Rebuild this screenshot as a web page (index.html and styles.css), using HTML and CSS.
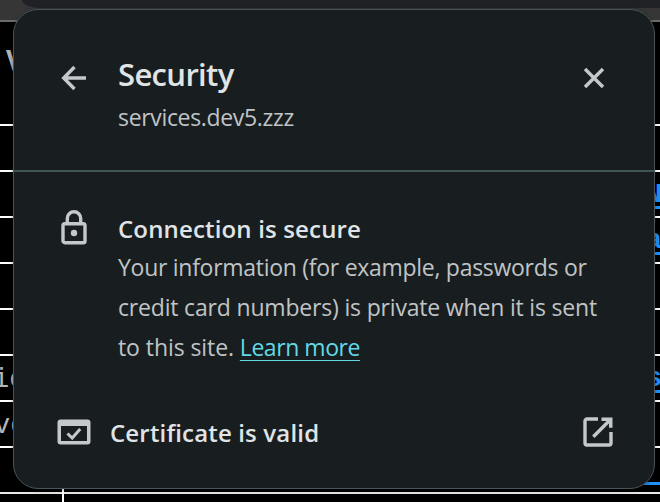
FILE: index.html
```html
<!DOCTYPE html>
<html lang="en">
<head>
<meta charset="utf-8">
<title>Security</title>
<link rel="stylesheet" href="styles.css">
</head>
<body>
<div class="toolbar"><div class="tabs"></div></div>
<div class="page">
  <div class="row head"><span class="title">V</span></div>
  <div class="row"></div>
  <div class="row"><a class="link">N</a></div>
  <div class="row"><a class="link">a</a></div>
  <div class="row"></div>
  <div class="row"></div>
  <div class="row"><span class="cell tight">ic</span><a class="link">s</a></div>
  <div class="row"><span class="cell">ve</span></div>
  <div class="row last"><a class="link wide"></a></div>
  <div class="foot"></div>
</div>
<section class="popup">
  <header class="header">
    <svg class="back" viewBox="0 0 28 28"><path d="M14.5 3 3.7 14l10.8 11M4 14h22" fill="none" stroke="currentColor" stroke-width="3.4"/></svg>
    <div class="heading"><h1>Security</h1><p>services.dev5.zzz</p></div>
    <svg class="close" viewBox="0 0 24 24"><path d="m3 3 18 18M21 3 3 21" fill="none" stroke="currentColor" stroke-width="3.4"/></svg>
  </header>
  <div class="connection">
    <svg class="lock" viewBox="0 0 26 36"><path d="M6.3 14V8.5a6.7 6.7 0 0 1 13.4 0V14" fill="none" stroke="currentColor" stroke-width="3.4"/><rect x="2" y="13.7" width="22" height="19" rx="1.8" fill="none" stroke="currentColor" stroke-width="3.4"/><circle cx="13" cy="23" r="3.2" fill="currentColor"/></svg>
    <div class="copy">
      <h2>Connection is secure</h2>
      <p class="l1">Your information (for example, passwords or</p>
      <p class="l2">credit card numbers) is private when it is sent</p>
      <p class="l3">to this site. <a class="learn">Learn more</a></p>
    </div>
  </div>
  <div class="certificate">
    <svg class="cert" viewBox="0 0 34 26"><path fill="currentColor" fill-rule="evenodd" d="M3.5.5h27a3 3 0 0 1 3 3v19a3 3 0 0 1-3 3h-27a3 3 0 0 1-3-3v-19a3 3 0 0 1 3-3ZM4 7v15h26V7Z"/><path d="m10.5 14.5 4.7 4.5 8-9" fill="none" stroke="currentColor" stroke-width="3"/></svg>
    <h2>Certificate is valid</h2>
    <svg class="open" viewBox="0 0 30 30"><path d="M15 2H4a2 2 0 0 0-2 2v22a2 2 0 0 0 2 2h22a2 2 0 0 0 2-2V15M10.3 19.7 27 3" fill="none" stroke="currentColor" stroke-width="3.4"/><path d="M18.5.5h11v10.3h-3.5V4h-7.5Z" fill="currentColor"/></svg>
  </div>
</section>
</body>
</html>
```
FILE: styles.css
```css
* { box-sizing: border-box; }
body { margin: 0; width: 660px; height: 502px; overflow: hidden; position: relative; background: #000; font-family: "Open Sans", "Noto Sans", sans-serif; }
h1, h2, p { margin: 0; white-space: nowrap; }
svg { display: block; flex: none; color: #c4c8cb; }
.toolbar { height: 22px; background: #363636; border-bottom: 2px solid #6b6b6b; }
.tabs { height: 8px; margin-left: 22px; background: #202124; border-bottom-left-radius: 22px 9px; }
.row { display: flex; justify-content: space-between; height: 46px; border-bottom: 2px solid #fff; }
.head { height: 104px; }
.title { font: 700 28px/32px "Open Sans", sans-serif; color: #b4b4b4; padding: 22px 0 0 6px; }
.cell { font: 27px/48px "Liberation Mono", monospace; color: #b4b4b4; margin-left: -6px; }
.tight { margin-left: -7px; }
.link { font: bold 27px/30px "Liberation Mono", monospace; color: #1e90ff; width: 12px; height: 37px; padding-top: 8px; margin: 0 -2px 0 auto; border-bottom: 3px solid #1e90ff; direction: rtl; }
.link.wide { width: 32px; }
.last { border-color: #e8e8e8; }
.foot { width: 64px; height: 14px; margin-top: -6px; border-right: 2px solid #fff; }
.popup { position: absolute; left: 13px; top: 9px; width: 642px; height: 480px; border: 1px solid #48545a; border-radius: 25px; background: #181e20; color: #c0c4c6; overflow: hidden; box-shadow: 0 1px 4px #0005; }
.header { display: flex; height: 162px; border-bottom: 2px solid #405457; padding-left: 46px; }
.back { width: 28px; height: 28px; margin-top: 54px; }
.heading { width: 478px; padding: 43px 0 0 30px; }
h1 { font-size: 31px; line-height: 42px; height: 43px; font-weight: 600; color: #e0e4e6; letter-spacing: -.65px; }
.heading p { font-size: 23px; line-height: 42px; letter-spacing: -.33px; }
.close { width: 24px; height: 24px; margin: 56px 0 0 16px; }
.connection { display: flex; height: 209px; padding: 36px 0 0 47px; }
.lock { width: 26px; height: 36px; margin-top: 2px; }
.copy { padding-left: 31px; }
h2 { font-size: 24px; line-height: 40px; font-weight: 600; color: #e0e4e6; letter-spacing: .16px; }
.copy h2 { height: 38px; margin-top: 1px; }
.copy p { font-size: 23px; line-height: 40px; }
.copy .l1 { letter-spacing: -.28px; }
.copy .l2 { letter-spacing: -.18px; }
.copy .l3 { letter-spacing: -.08px; }
.learn { color: #63d8e5; letter-spacing: -.45px; text-decoration: underline; text-decoration-thickness: 1px; text-underline-offset: 4px; }
.certificate { display: flex; align-items: center; height: 100px; padding: 1px 41px 0 43px; }
.cert { width: 34px; height: 26px; }
.certificate h2 { margin: 2px 0 0 19px; }
.open { width: 30px; height: 30px; margin-left: auto; }
```
